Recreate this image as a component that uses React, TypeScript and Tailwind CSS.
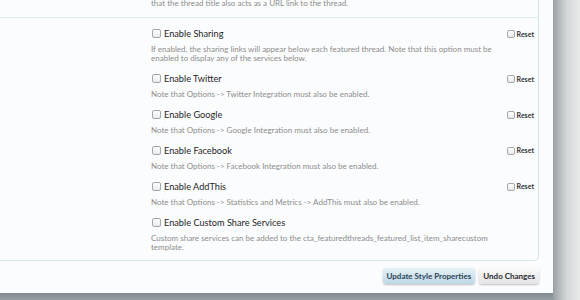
import React from "react";

type Opcion = {
  etiqueta: string;
  descripcion: string[];
  reset: boolean;
};

const OPCIONES: Opcion[] = [
  {
    etiqueta: "Enable Sharing",
    descripcion: [
      "If enabled, the sharing links will appear below each featured thread. Note that this option must be",
      "enabled to display any of the services below.",
    ],
    reset: true,
  },
  {
    etiqueta: "Enable Twitter",
    descripcion: ["Note that Options -> Twitter Integration must also be enabled."],
    reset: true,
  },
  {
    etiqueta: "Enable Google",
    descripcion: ["Note that Options -> Google Integration must also be enabled."],
    reset: true,
  },
  {
    etiqueta: "Enable Facebook",
    descripcion: ["Note that Options -> Facebook Integration must also be enabled."],
    reset: true,
  },
  {
    etiqueta: "Enable AddThis",
    descripcion: ["Note that Options -> Statistics and Metrics -> AddThis must also be enabled."],
    reset: true,
  },
  {
    etiqueta: "Enable Custom Share Services",
    descripcion: [
      "Custom share services can be added to the cta_featuredthreads_featured_list_item_sharecustom",
      "template.",
    ],
    reset: false,
  },
];

function Casilla({ size = "main" }: { size?: "main" | "small" }) {
  return (
    <span
      className={
        size === "main"
          ? "inline-block size-[9px] shrink-0 rounded-[2px] border border-[#a5a8ab] bg-gradient-to-b from-white to-[#e9eaec]"
          : "inline-block size-[8px] shrink-0 rounded-[2px] border border-[#a5a8ab] bg-gradient-to-b from-white to-[#e9eaec]"
      }
    />
  );
}

export default function App() {
  return (
    <div className="flex h-[300px] w-[580px] overflow-hidden font-['Lato','Open_Sans',sans-serif]">
      <div className="flex w-[553px] shrink-0 flex-col">
        <div className="h-[293px] rounded-br-[5px] bg-[#fbfcfd]">
          {/* Fieldset */}
          <div className="w-[539px] rounded-br-[5px] border-r border-b border-[#d3e5ea]">
            {/* fila anterior (cortada) */}
            <div className="-mt-[1px] border-b border-[#dcecef] pb-[9px] pl-[151px] text-[8px] leading-[9px] text-[#8c8c8c]">
              that the thread title also acts as a URL link to the thread.
            </div>

            <div className="pt-[9px]">
              {OPCIONES.map((o) => (
                <div key={o.etiqueta} className="flex pb-[8.6px]">
                  <div className="w-[151px] shrink-0" />
                  <div className="flex-1 pr-[4px]">
                    <div className="flex h-[14px] items-center justify-between">
                      <div className="flex items-center gap-[3px] pl-[1px]">
                        <Casilla />
                        <span className="text-[9.2px] text-[#1f1f1f]">{o.etiqueta}</span>
                      </div>
                      {o.reset && (
                        <div className="flex items-center gap-[2px]">
                          <Casilla size="small" />
                          <span className="text-[7px] font-bold text-[#333]">Reset</span>
                        </div>
                      )}
                    </div>
                    <div className="mt-[4.3px] text-[8px] leading-[9px] text-[#8c8c8c]">
                      {o.descripcion.map((l) => (
                        <div key={l}>{l}</div>
                      ))}
                    </div>
                  </div>
                </div>
              ))}
            </div>
          </div>

          {/* Botones */}
          <div className="flex w-[539px] justify-end gap-[4px] pt-[7px]">
            <button className="h-[16px] rounded-[3px] bg-gradient-to-b from-[#e6f1f7] to-[#bed8e6] px-[4px] text-[8px] font-bold text-[#2d4456] shadow-[0_1px_2px_rgba(0,0,0,0.25)]">
              Update Style Properties
            </button>
            <button className="h-[16px] rounded-[3px] bg-gradient-to-b from-[#fbfbfb] to-[#e4e4e6] px-[4px] text-[8px] font-bold text-[#2b2b2b] shadow-[0_1px_2px_rgba(0,0,0,0.25)]">
              Undo Changes
            </button>
          </div>
        </div>
        <div className="h-[7px] bg-gradient-to-b from-[#7f8b90] to-[#95a0a4]" />
      </div>
      <div className="flex-1 bg-gradient-to-r from-[#9aa1a4] via-[#d3d6d7] to-[#e9eaea]" />
    </div>
  );
}
